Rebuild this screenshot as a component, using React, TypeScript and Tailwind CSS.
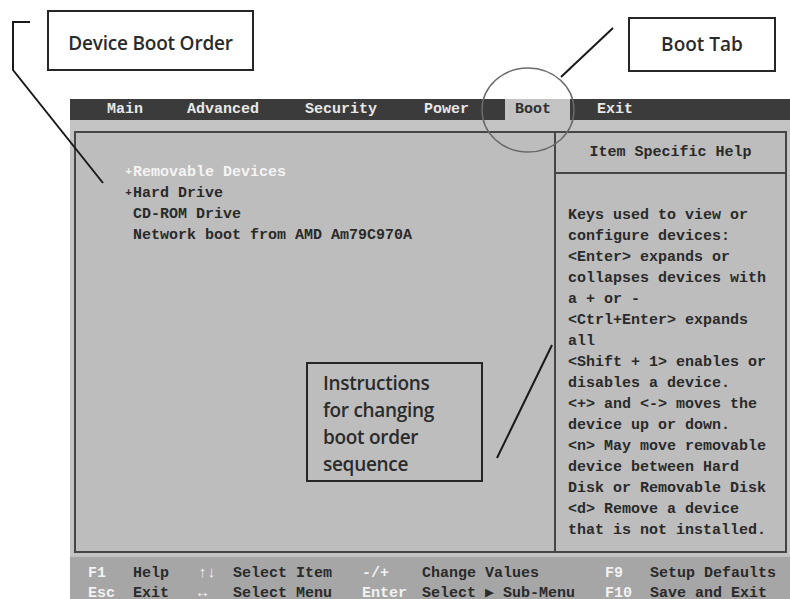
import React from 'react';

const mono = { fontFamily: '"Liberation Mono", "DejaVu Sans Mono", monospace' };
const sans = { fontFamily: '"Open Sans", "Noto Sans", sans-serif' };

const menus = [
  { label: 'Main', w: 'w-[80px]' },
  { label: 'Advanced', w: 'w-[118px]' },
  { label: 'Security', w: 'w-[119px]' },
  { label: 'Power', w: 'w-[81px]' },
];

const helpLines = [
  'Keys used to view or',
  'configure devices:',
  '<Enter> expands or',
  'collapses devices with',
  'a + or -',
  '<Ctrl+Enter> expands',
  'all',
  '<Shift + 1> enables or',
  'disables a device.',
  '<+> and <-> moves the',
  'device up or down.',
  '<n> May move removable',
  'device between Hard',
  'Disk or Removable Disk',
  '<d> Remove a device',
  'that is not installed.',
];

function Plus() {
  return <span className="inline-block w-[9px] text-center text-[11px] align-[1px]">+</span>;
}

function FooterRow({ cells }: { cells: string[] }) {
  const widths = ['w-[45px]', 'w-[65px]', 'w-[35px]', 'w-[129px]', 'w-[60px]', 'w-[183px]', 'w-[45px]', ''];
  return (
    <div className="flex h-[20px] items-center whitespace-pre">
      {cells.map((c, i) => (
        <span
          key={i}
          className={`${widths[i]} ${i % 2 === 0 ? 'text-[#f2f2f2]' : 'text-[#2a2a2a]'}`}
        >
          {c}
        </span>
      ))}
    </div>
  );
}

export default function App() {
  return (
    <div className="relative h-[599px] w-[790px] overflow-hidden bg-white">
      <div className="flex h-[99px] items-start" style={sans}>
        <div className="ml-[47px] mt-[10px] flex h-[61px] w-[207px] items-center justify-center border-2 border-[#262626] pt-[6px] text-[19px] font-semibold tracking-[-0.2px] text-[#2b2b2b]">
          Device Boot Order
        </div>
        <div className="ml-[374px] mt-[17px] flex h-[55px] w-[148px] items-center justify-center border-2 border-[#262626] text-[19px] font-semibold text-[#2b2b2b]">
          Boot Tab
        </div>
      </div>

      <div className="ml-[70px] flex h-[500px] w-[720px] flex-col text-[15px] font-bold" style={mono}>
        <div className="flex h-[21px] items-stretch bg-[#3b3b3b] pl-[37px] leading-[21px] text-[#e8e8e8]">
          {menus.map((m) => (
            <span key={m.label} className={m.w}>
              {m.label}
            </span>
          ))}
          <span className="h-[32px] w-[65px] bg-[#c3c3c3] pl-[10px] text-[#2e2e2e]">Boot</span>
          <span className="pl-[27px]">Exit</span>
        </div>

        <div className="bg-[#c3c3c3] pb-[4px] pl-[4px] pr-[3px] pt-[11px]">
          <div className="flex h-[422px] border-2 border-[#454545] bg-[#bdbdbd] leading-[21px] text-[#2a2a2a]">
            <div className="flex-1 whitespace-pre pl-[48px] pt-[29px]">
              <div className="text-[#f4f4f4]">
                <Plus />Removable Devices
              </div>
              <div>
                <Plus />Hard Drive
              </div>
              <div> CD-ROM Drive</div>
              <div> Network boot from AMD Am79C970A</div>
            </div>
            <div className="flex w-[231px] flex-col border-l-2 border-[#454545]">
              <div className="flex h-[41px] items-center justify-center border-b-2 border-[#454545]">
                Item Specific Help
              </div>
              <div className="whitespace-pre pl-[12px] pt-[31px]">
                {helpLines.map((l, i) => (
                  <div key={i}>{l}</div>
                ))}
              </div>
            </div>
          </div>
        </div>

        <div className="h-[42px] bg-[#a6a6a6] pl-[18px] pt-[7px]">
          <FooterRow cells={['F1', 'Help', '↑↓', 'Select Item', '-/+', 'Change Values', 'F9', 'Setup Defaults']} />
          <FooterRow cells={['Esc', 'Exit', '↔', 'Select Menu', 'Enter', 'Select ▶ Sub-Menu', 'F10', 'Save and Exit']} />
        </div>
      </div>

      <div
        className="absolute left-[306px] top-[362px] h-[120px] w-[177px] border-2 border-[#262626] pl-[15px] pt-[6px] text-[19px] font-semibold leading-[27px] tracking-[-0.3px] text-[#2b2b2b]"
        style={sans}
      >
        <div>Instructions</div>
        <div>for changing</div>
        <div>boot order</div>
        <div>sequence</div>
      </div>

      <svg className="pointer-events-none absolute left-0 top-0" width="790" height="599" viewBox="0 0 790 599">
        <polyline points="30,22 13,22 13,70 103,183" fill="none" stroke="#1a1a1a" strokeWidth="2" />
        <line x1="613" y1="28" x2="561" y2="77" stroke="#1a1a1a" strokeWidth="2" />
        <ellipse cx="528" cy="110" rx="46" ry="42" fill="none" stroke="#6a6a6a" strokeWidth="1.5" />
        <line x1="497" y1="458" x2="552" y2="345" stroke="#1a1a1a" strokeWidth="2" />
      </svg>
    </div>
  );
}
